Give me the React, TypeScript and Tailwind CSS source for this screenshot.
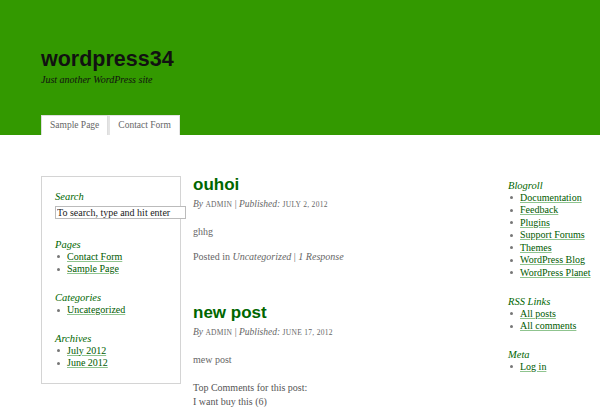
const serif = "font-['Liberation_Serif','Times_New_Roman',serif]";
const sans = "font-['Liberation_Sans',Arial,sans-serif]";

const blogroll = [
  'Documentation',
  'Feedback',
  'Plugins',
  'Support Forums',
  'Themes',
  'WordPress Blog',
  'WordPress Planet',
];

function WidgetTitle({ children }: { children: React.ReactNode }) {
  return <h3 className="text-[10.5px] italic leading-[13px] text-[#006600]">{children}</h3>;
}

function LinkList({ items }: { items: string[] }) {
  return (
    <ul>
      {items.map((item) => (
        <li key={item} className="flex items-center text-[10px] leading-[12.5px]">
          <span className="ml-[2px] mr-[7px] h-[3px] w-[3px] shrink-0 rounded-full bg-[#777]" />
          <a
            href="#"
            className="whitespace-nowrap text-[#005a00] underline decoration-[#8fc48f] underline-offset-[1px]"
          >
            {item}
          </a>
        </li>
      ))}
    </ul>
  );
}

function PostMeta({ date }: { date: string }) {
  return (
    <p className="mt-[2px] text-[9.5px] leading-[14px] text-[#666]">
      <em>By</em> <span className="text-[7.5px] uppercase tracking-[0.3px]">admin</span> |{' '}
      <em>Published:</em>{' '}
      <span className="text-[7.5px] uppercase tracking-[0.3px]">{date}</span>
    </p>
  );
}

export default function App() {
  return (
    <div className={`min-h-[407px] w-[600px] overflow-hidden bg-white ${serif}`}>
      <header className="flex h-[135px] flex-col bg-[#339900] pl-[41px]">
        <h1 className={`mt-[47px] text-[21.5px] font-bold leading-[24px] text-[#111] ${sans}`}>
          wordpress34
        </h1>
        <p className="mt-[3px] text-[10px] italic leading-[12px] text-[#111]">
          Just another WordPress site
        </p>
        <nav className="mt-auto flex h-[20px]">
          <a
            href="#"
            className="flex items-center border border-b-0 border-[#ddd] bg-white px-[8px] text-[9.5px] text-[#666]"
          >
            Sample Page
          </a>
          <a
            href="#"
            className="flex items-center border border-b-0 border-l-[2px] border-[#e4e4e4] bg-white px-[8px] text-[9.5px] text-[#666]"
          >
            Contact Form
          </a>
        </nav>
      </header>

      <div className="flex items-start pl-[41px] pt-[40px]">
        <aside className="mt-[1px] w-[140px] shrink-0 border border-[#d4d4d4] px-[13px] pb-[13px] pt-[12.5px]">
          <WidgetTitle>Search</WidgetTitle>
          <input
            readOnly
            value="To search, type and hit enter"
            className="mt-[3.5px] block h-[13px] w-[131px] border border-[#bbb] bg-white px-[1px] text-[10px] leading-[11px] text-[#222] outline-none"
          />
          <div className="mt-[18.5px]">
            <WidgetTitle>Pages</WidgetTitle>
            <LinkList items={['Contact Form', 'Sample Page']} />
          </div>
          <div className="mt-[15.5px]">
            <WidgetTitle>Categories</WidgetTitle>
            <LinkList items={['Uncategorized']} />
          </div>
          <div className="mt-[15px]">
            <WidgetTitle>Archives</WidgetTitle>
            <LinkList items={['July 2012', 'June 2012']} />
          </div>
        </aside>

        <main className="ml-[12px] w-[315px] shrink-0">
          <article>
            <h2 className={`text-[17px] font-bold leading-[20px] text-[#006600] ${sans}`}>ouhoi</h2>
            <PostMeta date="july 2, 2012" />
            <p className="mt-[13px] text-[10px] leading-[14px] text-[#666]">ghhg</p>
            <p className="mt-[11px] text-[10px] leading-[14px] text-[#666]">
              Posted in <em>Uncategorized</em> | <em>1 Response</em>
            </p>
          </article>
          <article className="mt-[39px]">
            <h2 className={`text-[17px] font-bold leading-[20px] text-[#006600] ${sans}`}>new post</h2>
            <PostMeta date="june 17, 2012" />
            <p className="mt-[13px] text-[10px] leading-[14px] text-[#666]">mew post</p>
            <p className="mt-[14px] text-[10px] leading-[14px] text-[#555]">Top Comments for this post:</p>
            <p className="text-[10px] leading-[14px] text-[#555]">I want buy this (6)</p>
          </article>
        </main>

        <aside className="mt-[3.5px] w-[92px] shrink-0">
          <WidgetTitle>Blogroll</WidgetTitle>
          <LinkList items={blogroll} />
          <div className="mt-[15.5px]">
            <WidgetTitle>RSS Links</WidgetTitle>
            <LinkList items={['All posts', 'All comments']} />
          </div>
          <div className="mt-[15px]">
            <WidgetTitle>Meta</WidgetTitle>
            <LinkList items={['Log in']} />
          </div>
        </aside>
      </div>
    </div>
  );
}
